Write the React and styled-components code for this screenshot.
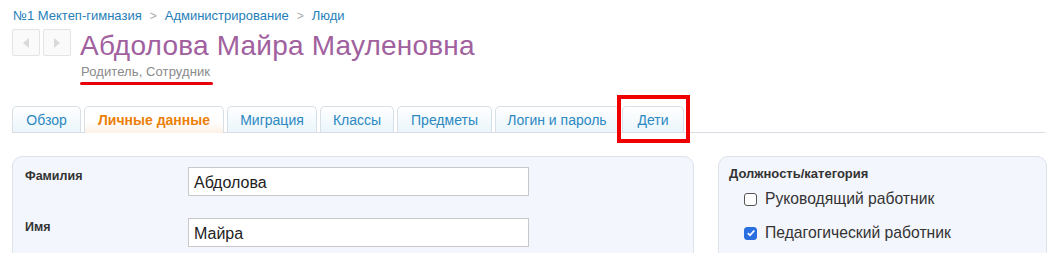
import React from "react";
import styled, { createGlobalStyle } from "styled-components";

const Global = createGlobalStyle`
  html, body { margin: 0; padding: 0; background: #fff; }
  body { font-family: "Liberation Sans", Arial, sans-serif; color: #333; }
`;

const Page = styled.div`
  width: 1059px;
  height: 253px;
  overflow: hidden;
  position: relative;
`;

const Breadcrumbs = styled.nav`
  display: flex;
  align-items: center;
  gap: 8px;
  padding: 8px 0 0 13px;
  font-size: 13px;
  line-height: 16px;
`;

const Crumb = styled.a`
  color: #1f80b9;
  text-decoration: none;
`;

const Sep = styled.span`
  color: #aaa;
  font-size: 12px;
`;

const Header = styled.div`
  display: flex;
  align-items: flex-start;
  padding: 5px 0 0 12px;
`;

const NavButtons = styled.div`
  display: flex;
  gap: 3px;
  margin-right: 9px;
`;

const NavButton = styled.button`
  width: 28px;
  height: 27px;
  padding: 0;
  border: 1px solid #e4e4e4;
  border-radius: 2px;
  background: #fafafa;
  display: flex;
  align-items: center;
  justify-content: center;
`;

const TitleBlock = styled.div`
  display: flex;
  flex-direction: column;
`;

const Title = styled.h1`
  margin: 0;
  font-size: 28px;
  letter-spacing: 0.2px;
  line-height: 33px;
  font-weight: normal;
  color: #a1609e;
`;

const Subtitle = styled.div`
  position: relative;
  display: inline-block;
  align-self: flex-start;
  margin-top: 2px;
  margin-left: 1px;
  font-size: 13px;
  letter-spacing: 0.1px;
  line-height: 16px;
  color: #8a8a8a;
  &::after {
    content: "";
    position: absolute;
    left: -1px;
    right: -3px;
    top: 18px;
    height: 3px;
    border-radius: 2px;
    background: #e8000b;
  }
`;

const Tabs = styled.div`
  display: flex;
  gap: 3px;
  margin: 26px 14px 0 12px;
  border-bottom: 1px solid #d8dde3;
  position: relative;
`;

const Tab = styled.div`
  width: ${p => p.$w}px;
  box-sizing: border-box;
  border: 1px solid #d7e0e6;
  border-bottom: none;
  border-radius: 5px 5px 0 0;
  display: flex;
  align-items: center;
  justify-content: center;
  font-size: 14px;
  color: ${p => (p.$active ? "#ec7f07" : "#2b88c1")};
  font-weight: ${p => (p.$active ? "bold" : "normal")};
  background: ${p =>
    p.$active
      ? "linear-gradient(#ffffff, #ffffff 55%, #fdf1e6)"
      : "linear-gradient(#ffffff, #eaf5fb)"};
  margin-bottom: ${p => (p.$active ? "-1px" : "0")};
  height: ${p => (p.$active ? "27px" : "26px")};
`;

const Highlight = styled.div`
  position: absolute;
  left: 605px;
  top: -11px;
  width: 65px;
  height: 40px;
  border: 4px solid #f00000;
`;

const Content = styled.div`
  display: flex;
  gap: 24px;
  margin: 23px 14px 0 12px;
`;

const Panel = styled.section`
  width: ${p => p.$w}px;
  flex: none;
  background: #f3f6fc;
  border: 1px solid #dde3ea;
  border-radius: 10px;
  height: 120px;
  box-sizing: border-box;
  padding: ${p => p.$pad};
`;

const FieldRow = styled.div`
  display: grid;
  grid-template-columns: 163px 341px;
  height: 51px;
`;

const Label = styled.label`
  font-size: 12.5px;
  font-weight: bold;
  color: #333;
  padding-top: 2px;
`;

const Input = styled.input`
  height: 29px;
  box-sizing: border-box;
  border: 1px solid #c9c9c9;
  background: #fff;
  padding: 2px 5px 0;
  font-family: "Liberation Sans", Arial, sans-serif;
  font-size: 16px;
  color: #222;
  outline: none;
`;

const GroupTitle = styled.div`
  font-size: 13px;
  line-height: 15px;
  font-weight: bold;
  color: #333;
  margin-bottom: 1px;
`;

const CheckRow = styled.label`
  display: flex;
  align-items: center;
  gap: 8px;
  font-size: 15.7px;
  color: #333;
  height: 34px;
  margin-left: 15px;
`;

const Box = styled.span`
  width: 13px;
  height: 13px;
  box-sizing: border-box;
  border-radius: 3px;
  border: 1px solid ${p => (p.$checked ? "#2a6fe0" : "#555")};
  background: ${p => (p.$checked ? "#2a6fe0" : "#fff")};
  display: flex;
  align-items: center;
  justify-content: center;
`;

const Arrow = ({ dir }) => (
  <svg width="12" height="14" viewBox="0 0 12 14">
    {dir === "left" ? (
      <polygon points="9,2 9,12 3,7" fill="#d9d9d9" />
    ) : (
      <polygon points="3,2 3,12 9,7" fill="#d9d9d9" />
    )}
  </svg>
);

export default function App() {
  const tabs = [
    { t: "Обзор", w: 69 },
    { t: "Личные данные", w: 140, active: true },
    { t: "Миграция", w: 90 },
    { t: "Классы", w: 74 },
    { t: "Предметы", w: 95 },
    { t: "Логин и пароль", w: 124 },
    { t: "Дети", w: 62 },
  ];
  return (
    <Page>
      <Global />
      <Breadcrumbs>
        <Crumb>№1 Мектеп-гимназия</Crumb>
        <Sep>&gt;</Sep>
        <Crumb>Администрирование</Crumb>
        <Sep>&gt;</Sep>
        <Crumb>Люди</Crumb>
      </Breadcrumbs>
      <Header>
        <NavButtons>
          <NavButton><Arrow dir="left" /></NavButton>
          <NavButton><Arrow dir="right" /></NavButton>
        </NavButtons>
        <TitleBlock>
          <Title>Абдолова Майра Мауленовна</Title>
          <Subtitle>Родитель, Сотрудник</Subtitle>
        </TitleBlock>
      </Header>
      <Tabs>
        {tabs.map(x => (
          <Tab key={x.t} $active={x.active} $w={x.w}>{x.t}</Tab>
        ))}
        <Highlight />
      </Tabs>
      <Content>
        <Panel $w={682} $pad="10px 0 0 12px">
          <FieldRow>
            <Label>Фамилия</Label>
            <Input defaultValue="Абдолова" readOnly />
          </FieldRow>
          <FieldRow>
            <Label>Имя</Label>
            <Input defaultValue="Майра" readOnly />
          </FieldRow>
        </Panel>
        <Panel $w={329} $pad="9px 0 0 10px">
          <GroupTitle>Должность/категория</GroupTitle>
          <CheckRow>
            <Box />
            Руководящий работник
          </CheckRow>
          <CheckRow>
            <Box $checked>
              <svg width="10" height="10" viewBox="0 0 10 10">
                <polyline points="1.8,5.2 4,7.3 8.3,2.5" fill="none" stroke="#fff" strokeWidth="1.8" />
              </svg>
            </Box>
            Педагогический работник
          </CheckRow>
        </Panel>
      </Content>
    </Page>
  );
}
